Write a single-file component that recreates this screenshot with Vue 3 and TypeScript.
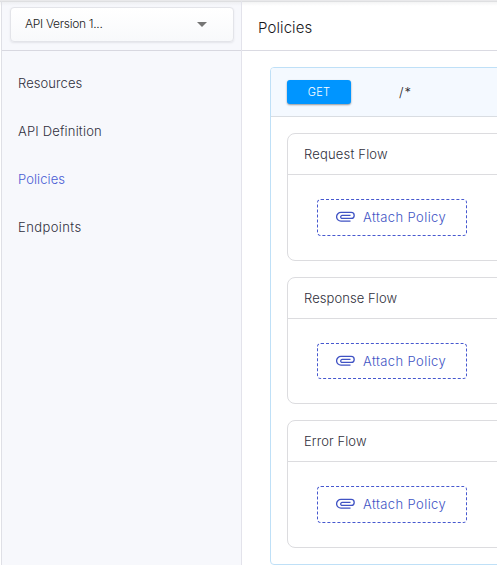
<script setup lang="ts">
interface NavItem {
  label: string
  key: string
}

const navItems: NavItem[] = [
  { label: 'Resources', key: 'resources' },
  { label: 'API Definition', key: 'definition' },
  { label: 'Policies', key: 'policies' },
  { label: 'Endpoints', key: 'endpoints' },
]
const activeKey = 'policies'

const flows = [
  { title: 'Request Flow', key: 'request' },
  { title: 'Response Flow', key: 'response' },
  { title: 'Error Flow', key: 'error' },
]
</script>

<template>
  <div class="page">
    <aside class="sidebar">
      <div class="version-bar">
        <button class="version-select" type="button">
          <span>API Version 1...</span>
          <svg class="caret" width="10" height="5" viewBox="0 0 10 5"><path d="M0 0h10L5 5z" fill="#757575" /></svg>
        </button>
      </div>
      <nav class="nav">
        <a
          v-for="item in navItems"
          :key="item.key"
          :class="['nav-item', item.key, { active: item.key === activeKey }]"
        >{{ item.label }}</a>
      </nav>
    </aside>
    <main class="main">
      <header class="title-bar"><h1>Policies</h1></header>
      <section class="operation">
        <div class="operation-head">
          <span class="method">GET</span>
          <span class="path">/*</span>
        </div>
        <div class="flows">
          <article v-for="flow in flows" :key="flow.key" class="flow">
            <h2 :class="flow.key">{{ flow.title }}</h2>
            <div class="flow-body">
              <button class="attach" type="button">
                <svg class="clip" width="20" height="12" viewBox="0 0 20 12">
                  <path
                    fill="none"
                    stroke="currentColor"
                    stroke-width="1.3"
                    d="M14.5 10.2H5A4.4 4.4 0 0 1 5 1.4h10.2a3 3 0 0 1 0 6H6.2a1.5 1.5 0 0 1 0-3h8.3"
                  />
                </svg>
                <span>Attach Policy</span>
              </button>
            </div>
          </article>
        </div>
      </section>
    </main>
  </div>
</template>

<style>
body {
  margin: 0;
  overflow: hidden;
}
</style>

<style scoped>
.page {
  box-sizing: border-box;
  display: flex;
  height: 565px;
  overflow: hidden;
  border-top: 1px solid #e9e9eb;
  background: linear-gradient(#dedfe1 0, #dedfe1 1px, rgba(222, 223, 225, 0.35) 1px, rgba(255, 255, 255, 0) 5px), #fff;
  color: #30303c;
  font-family: Inter, "Liberation Sans", sans-serif;
  font-weight: 300;
}
button {
  font: inherit;
  color: inherit;
}
.sidebar {
  box-sizing: border-box;
  flex: none;
  width: 241px;
  margin-left: 1px;
  border-left: 1px solid #dfe0e6;
  border-right: 1px solid #e3e3eb;
  background: linear-gradient(#dedfe1 0, #dedfe1 1px, rgba(222, 223, 225, 0.35) 1px, rgba(247, 248, 252, 0) 5px), #f7f8fc;
}
.version-bar {
  box-sizing: border-box;
  height: 50px;
  padding: 6px 7px 0 8px;
  border-bottom: 1px solid #d8d8e0;
}
.version-select {
  box-sizing: border-box;
  display: flex;
  align-items: center;
  justify-content: space-between;
  width: 224px;
  height: 35px;
  padding: 0 26px 3px 14px;
  border: 1px solid #e3e4e9;
  border-radius: 4px;
  background: linear-gradient(#fff, #f8f9fb);
  box-shadow: 0 1px 2px rgba(60, 60, 80, 0.1);
  font-size: 12px;
  font-weight: 350;
  letter-spacing: -0.3px;
  color: #222;
}
.caret {
  margin-top: 3px;
}
.nav {
  display: flex;
  flex-direction: column;
  padding-top: 8px;
}
.nav-item {
  height: 48px;
  padding-left: 16px;
  line-height: 48px;
  font-size: 13px;
  letter-spacing: 0.08px;
}
.nav-item.definition {
  letter-spacing: 0.18px;
}
.nav-item.endpoints {
  letter-spacing: 0.4px;
}
.nav-item.active {
  color: #4a5dd4;
}
.main {
  flex: 1;
  min-width: 0;
}
.title-bar {
  box-sizing: border-box;
  height: 50px;
  padding: 2px 0 0 16px;
  border-bottom: 1px solid #dadae2;
}
h1 {
  margin: 0;
  line-height: 49px;
  font-size: 15px;
  font-weight: 300;
  letter-spacing: 0.1px;
  color: #18181c;
}
.operation {
  box-sizing: border-box;
  width: 260px;
  height: 498px;
  margin: 16px 0 0 28px;
  border: 1px solid #bfe0f7;
  border-radius: 4px;
}
.operation-head {
  box-sizing: border-box;
  display: flex;
  align-items: center;
  height: 49px;
  padding: 0 16px;
  border-bottom: 1px solid #d9dde2;
  border-radius: 3px 3px 0 0;
  background: #f4f9ff;
}
.method {
  display: flex;
  align-items: center;
  justify-content: center;
  width: 64px;
  height: 24px;
  border-radius: 3px;
  background: #0095ff;
  box-shadow: 0 1px 2px rgba(0, 0, 0, 0.4);
  font-size: 11px;
  letter-spacing: 0.2px;
  color: #fff;
}
.path {
  margin-left: 48px;
  font-size: 13px;
  letter-spacing: 1px;
  color: #222226;
}
.flows {
  display: flex;
  flex-direction: column;
  gap: 16px;
  padding: 16px 0 0 16px;
}
.flow {
  box-sizing: border-box;
  width: 250px;
  height: 127.6px;
  border: 1px solid #dcdcdf;
  border-radius: 8px;
}
h2 {
  box-sizing: border-box;
  height: 41px;
  margin: 0;
  padding-left: 16px;
  border-bottom: 1px solid #dcdcdf;
  line-height: 41px;
  font-size: 13px;
  font-weight: 300;
  letter-spacing: 0.08px;
}
h2.request {
  letter-spacing: 0.18px;
}
.flow-body {
  padding: 24px 29px;
}
.attach {
  box-sizing: border-box;
  display: flex;
  align-items: center;
  width: 150px;
  height: 36.6px;
  padding: 0 0 0 18px;
  border: 1px dashed #4658cf;
  border-radius: 4px;
  background: transparent;
  color: #4053c4;
  font-size: 13px;
  letter-spacing: 0.4px;
}
.clip {
  flex: none;
  margin: 0 7px 0 0;
}
</style>
